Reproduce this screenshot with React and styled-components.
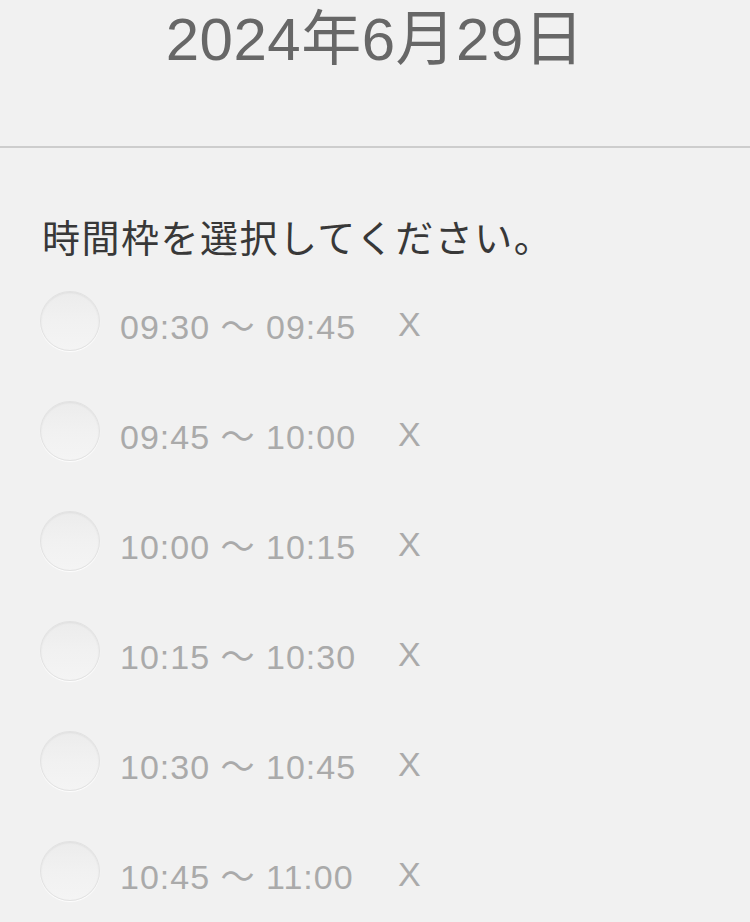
import React from "react";
import styled, { createGlobalStyle } from "styled-components";

const slots = [
  ["09:30", "09:45"],
  ["09:45", "10:00"],
  ["10:00", "10:15"],
  ["10:15", "10:30"],
  ["10:30", "10:45"],
  ["10:45", "11:00"],
];

const GlobalStyle = createGlobalStyle`
  body {
    margin: 0;
    background: #f1f1f1;
    font-family: "Liberation Sans", "Noto Sans CJK JP", sans-serif;
  }
`;

const App = () => {
  return (
    <Wrapper>
      <GlobalStyle />
      <Header>
        <DateTitle>2024年6月29日</DateTitle>
      </Header>
      <Body>
        <Prompt>時間枠を選択してください。</Prompt>
        <SlotList>
          {slots.map(([from, to]) => (
            <Slot key={from}>
              <Radio type="radio" name="slot" />
              <SlotTime>
                {from} ～ {to}
              </SlotTime>
              <Remove>X</Remove>
            </Slot>
          ))}
        </SlotList>
      </Body>
    </Wrapper>
  );
};

export default App;

const Wrapper = styled.div`
  width: 750px;
  min-height: 922px;
  overflow: hidden;
`;

const Header = styled.div`
  height: 146px;
  border-bottom: 2px solid #cdcdcd;
  display: flex;
  justify-content: center;
`;

const DateTitle = styled.h1`
  margin: 0;
  padding-top: 2px;
  font-weight: normal;
  font-size: 60px;
  line-height: 76px;
  color: #676767;
  letter-spacing: 0.5px;
`;

const Body = styled.div`
  padding: 67px 0 0 40px;
`;

const Prompt = styled.p`
  margin: 0;
  font-size: 38px;
  line-height: 48px;
  letter-spacing: 1.5px;
  color: #383838;
  padding-left: 2px;
`;

const SlotList = styled.div`
  display: flex;
  flex-direction: column;
  gap: 50px;
  margin-top: 28px;
`;

const Slot = styled.label`
  display: flex;
  align-items: center;
  height: 60px;
`;

const Radio = styled.input`
  appearance: none;
  margin: 0;
  width: 60px;
  height: 60px;
  border-radius: 50%;
  border: 1px solid #e2e2e2;
  background: linear-gradient(#ececec, #f1f1f1 50%, #f4f4f4);
  box-shadow: inset 0 1px 2px rgba(0, 0, 0, 0.06), 0 1px 1px rgba(255, 255, 255, 0.9);
  box-sizing: border-box;
`;

const SlotTime = styled.span`
  margin-left: 20px;
  padding-top: 6px;
  width: 236px;
  font-size: 34px;
  letter-spacing: 1px;
  color: #aaaaaa;
  white-space: nowrap;
`;

const Remove = styled.span`
  margin-left: 42px;
  padding-top: 6px;
  font-size: 34px;
  color: #aaaaaa;
`;
